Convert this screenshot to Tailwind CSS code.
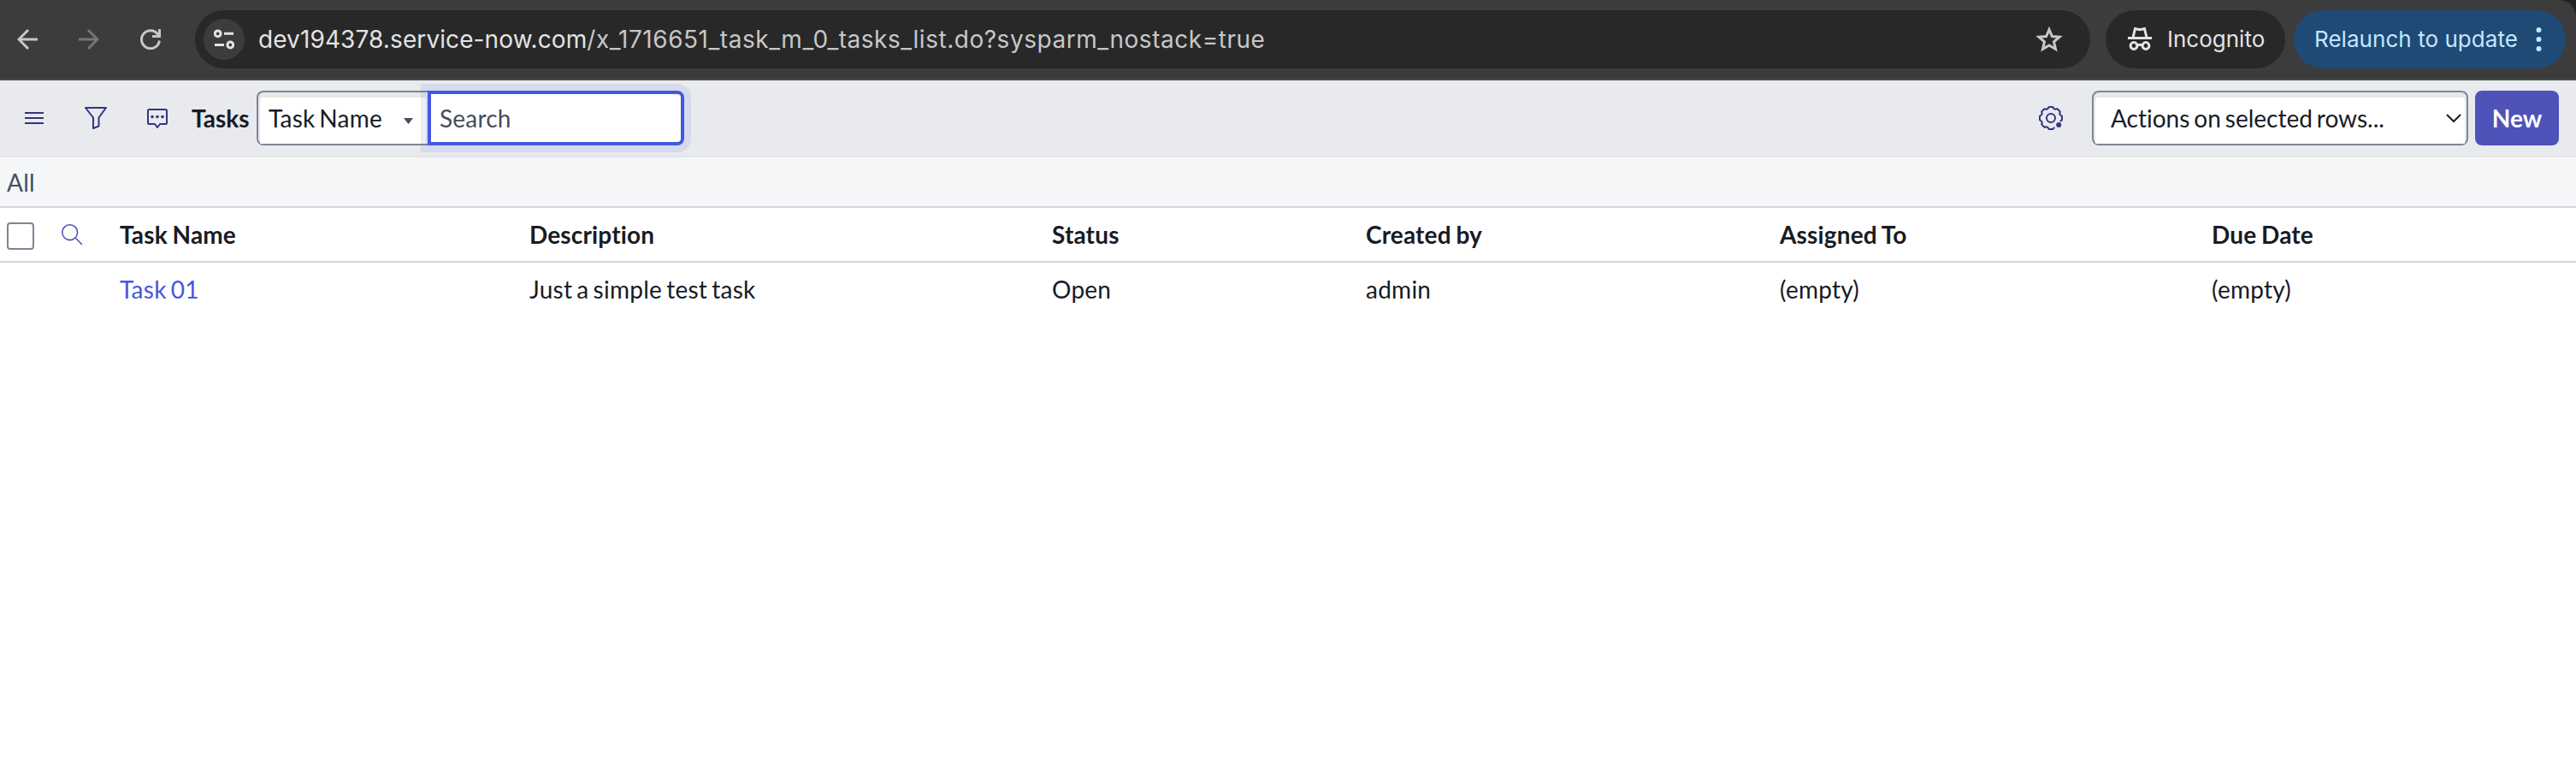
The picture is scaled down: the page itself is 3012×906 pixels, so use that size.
<!DOCTYPE html>
<html lang="en">
<head>
<meta charset="utf-8">
<title>Tasks</title>
<script src="https://cdn.jsdelivr.net/npm/@tailwindcss/browser@4"></script>
</head>
<body class="w-[3012px] h-[906px] overflow-hidden bg-white font-[Lato,sans-serif] text-[28px] leading-[40px] text-[#181b25] [font-variant-ligatures:none]">
<!-- Browser bar -->
<header class="bg-[#202122]">
<div class="flex h-[94px] items-start rounded-tr-[20px] border-b-2 border-[#4a4a4a] bg-[#3c3c3c] pt-3 font-[Inter,sans-serif]">
  <div class="flex h-[68px] w-[228px] shrink-0 items-center pl-5">
    <svg class="h-6 w-6" viewBox="0 0 24 24" fill="none" stroke="#c7c7c7" stroke-width="3"><path d="M24 12H2M13 1L2 12l11 11"/></svg>
    <svg class="ml-12 h-6 w-6" viewBox="0 0 24 24" fill="none" stroke="#757575" stroke-width="3"><path d="M0 12h22M11 1l11 11-11 11"/></svg>
    <svg class="ml-12 h-6 w-6" viewBox="0 0 24 24" fill="none" stroke="#c7c7c7" stroke-width="3"><path d="M22.4 13.5A10.5 10.5 0 1 1 20.5 6L22 8M14 8.5h8.5V0"/></svg>
  </div>
  <div class="flex h-[68px] w-[2216px] shrink-0 items-center rounded-full bg-[#282828] pl-[10px]">
    <div class="flex h-12 w-12 items-center justify-center rounded-full bg-[#3c3c3c]">
      <svg class="h-6 w-6" viewBox="0 0 24 24" fill="none" stroke="#e3e3e3" stroke-width="3"><circle cx="4.7" cy="5.3" r="3.4"/><path d="M12 5.3h11M1 18.5h11"/><circle cx="19.3" cy="18.5" r="3.4"/></svg>
    </div>
    <div class="ml-4 whitespace-pre text-[28px] tracking-[0.53px] text-[#c7c7c7]"><span class="tracking-[0.1px] text-[#e3e3e3]">dev194378.service-now.com</span>/x_1716651_task_m_0_tasks_list.do?sysparm_nostack=true</div>
    <svg class="mr-8 ml-auto h-8 w-8" viewBox="0 0 32 32" fill="none" stroke="#c7c7c7" stroke-width="3"><path d="M16 4.500l3.400 8 8.700.700-6.600 5.700 2 8.500L16 22.900l-7.500 4.500 2-8.500-6.600-5.700 8.700-.700z"/></svg>
  </div>
  <div class="ml-[18px] flex h-[68px] w-[210px] shrink-0 items-center rounded-full bg-[#282828] pl-[25px] text-[#e3e3e3]">
    <svg class="-mt-[3px] h-7 w-[30px]" viewBox="0 0 30 28" fill="none" stroke="#e3e3e3" stroke-width="3"><path d="M1 13.500h28M7 13l2.500-10.500 5.500 1.300 5.500-1.300L23 13M12 22q3-1.500 6 0"/><circle cx="8" cy="22.500" r="3.900"/><circle cx="22" cy="22.500" r="3.900"/></svg>
    <span class="ml-[17px] text-[26px]">Incognito</span>
  </div>
  <div class="ml-[10px] flex h-[68px] w-[318px] shrink-0 items-center rounded-full bg-[#1f4a75] pl-6 text-[#c2e7ff]">
    <span class="whitespace-nowrap text-[26px] tracking-[0.05px]">Relaunch to update</span>
    <svg class="mr-[28px] ml-auto h-7 w-[7px]" viewBox="0 0 7 28" fill="#c2e7ff"><circle cx="3.500" cy="3" r="3"/><circle cx="3.500" cy="14" r="3"/><circle cx="3.500" cy="25" r="3"/></svg>
  </div>
</div>
</header>
<!-- List toolbar -->
<div class="flex h-[90px] items-start border-b-2 border-[#e4e5e8] bg-[#e8eaee] pt-3">
  <div class="flex h-16 items-center">
    <svg class="ml-[29px] h-[14px] w-[22px]" viewBox="0 0 22 14" stroke="#32357f" stroke-width="2"><path d="M0 1h22M0 7h22M0 13h22"/></svg>
    <svg class="ml-[48px] h-[26px] w-[26px]" viewBox="0 0 26 26" fill="none" stroke="#32357f" stroke-width="2" stroke-linejoin="round"><path d="M1 1h24l-8.500 11.500v10L10 25V12.500z"/></svg>
    <svg class="mt-[2px] ml-[47px] h-6 w-6" viewBox="0 0 24 24" fill="none" stroke="#32357f" stroke-width="2" stroke-linejoin="round"><path d="M2.500 1h19Q23 1 23 2.500v14q0 1.500-1.500 1.500H15l-3 4-3-4H2.500Q1 18 1 16.500v-14Q1 1 2.500 1z"/><g fill="#32357f" stroke="none"><circle cx="6" cy="9.500" r="1.800"/><circle cx="12" cy="9.500" r="1.800"/><circle cx="18" cy="9.500" r="1.800"/></g></svg>
    <h1 class="ml-7 w-[76px] whitespace-nowrap font-bold">Tasks</h1>
  </div>
  <div class="flex h-16 w-[200px] items-center rounded-l-lg border-2 border-r-0 border-[#7d8596] bg-[#e8e8e8] px-[2px] pt-[6px]">
    <div class="flex h-[54px] w-full items-center rounded-tl bg-white pr-[15px] pb-[6px] pl-[10px]">
      <span class="tracking-[0.2px] [word-spacing:-2.4px]">Task Name</span>
      <svg class="mt-[6px] ml-auto h-[7px] w-[11px]" viewBox="0 0 11 7"><path d="M0 0h11L5.500 7z" fill="#464c5c"/></svg>
    </div>
  </div>
  <div class="flex h-16 w-[300px] items-center rounded-r-lg border-4 border-[#4358e0] bg-white pl-[10px] text-[#464c5c] shadow-[0_0_0_8px_rgba(67,88,224,0.11)]"><span class="tracking-[0.2px]">Search</span></div>
  <div class="mr-5 ml-auto flex h-16 items-center">
    <svg class="mr-[34px] h-7 w-7" viewBox="-14 -14 28 28" fill="none" stroke="#32357f" stroke-width="2" stroke-linejoin="round"><path d="M4.500 11.200Q3.200 11.200 2.600 12.700Q0 13.500-2.600 12.700Q-3.900 9.300-7.200 10.800Q-9.500 9.500-10.800 7.200Q-9.300 3.900-12.700 2.600Q-13.500 0-12.700-2.600Q-9.300-3.900-10.800-7.200Q-9.500-9.500-7.200-10.800Q-3.900-9.300-2.600-12.700Q0-13.500 2.600-12.700Q3.900-9.300 7.200-10.800Q9.500-9.500 10.800-7.200Q9.300-3.900 12.700-2.600Q13.500 0 12.700 2.600Q11.200 3.200 11 4.300"/><circle r="5"/><circle cx="9.200" cy="8" r="3" fill="#32357f" stroke="none"/></svg>
    <div class="flex h-16 w-[440px] items-center rounded-lg border-2 border-[#7d8596] bg-[#e8e8e8] px-[2px] pt-[6px]">
      <div class="flex h-[54px] w-full items-center rounded-t bg-white pr-[4px] pb-[6px] pl-[18px]">
        <span class="[word-spacing:-2.2px]">Actions on selected rows...</span>
        <svg class="ml-auto h-[10px] w-[18px]" viewBox="0 0 18 10" fill="none" stroke="#181b25" stroke-width="2"><path d="M1 1l8 8 8-8"/></svg>
      </div>
    </div>
    <div class="ml-2 flex h-16 w-[98px] items-center justify-center rounded-lg bg-[#4f52b9] font-bold text-white">New</div>
  </div>
</div>
<!-- Breadcrumb -->
<div class="flex h-[59px] items-center border-b-2 border-[#d5d6da] bg-[#f5f6f8] pt-px pl-2 text-[#464c5c]"><span class="tracking-[0.3px]">All</span></div>
<!-- Task list -->
<div class="grid h-[64px] grid-cols-[140px_479px_611px_367px_484px_505px_1fr] items-center border-b-2 border-[#d5d6da] font-bold tracking-[0.15px] [word-spacing:-1.2px]">
  <div class="flex items-center pt-1 pl-2">
    <span class="h-8 w-8 rounded border-2 border-[#7d8596]"></span>
    <svg class="-mt-1 ml-8 h-[25px] w-[25px]" viewBox="0 0 25 25" fill="none" stroke="#4f52b9" stroke-width="1.600"><circle cx="9.700" cy="9.700" r="8.900"/><path d="M16 16l8 8"/></svg>
  </div>
  <div>Task Name</div><div>Description</div><div>Status</div><div>Created by</div><div>Assigned To</div><div>Due Date</div>
</div>
<div class="grid h-[61px] grid-cols-[140px_479px_611px_367px_484px_505px_1fr] items-center tracking-[0.25px] [word-spacing:-2.3px]">
  <div></div><div class="text-[#4358e0]">Task 01</div><div>Just a simple test task</div><div>Open</div><div>admin</div><div>(empty)</div><div>(empty)</div>
</div>
</body>
</html>
